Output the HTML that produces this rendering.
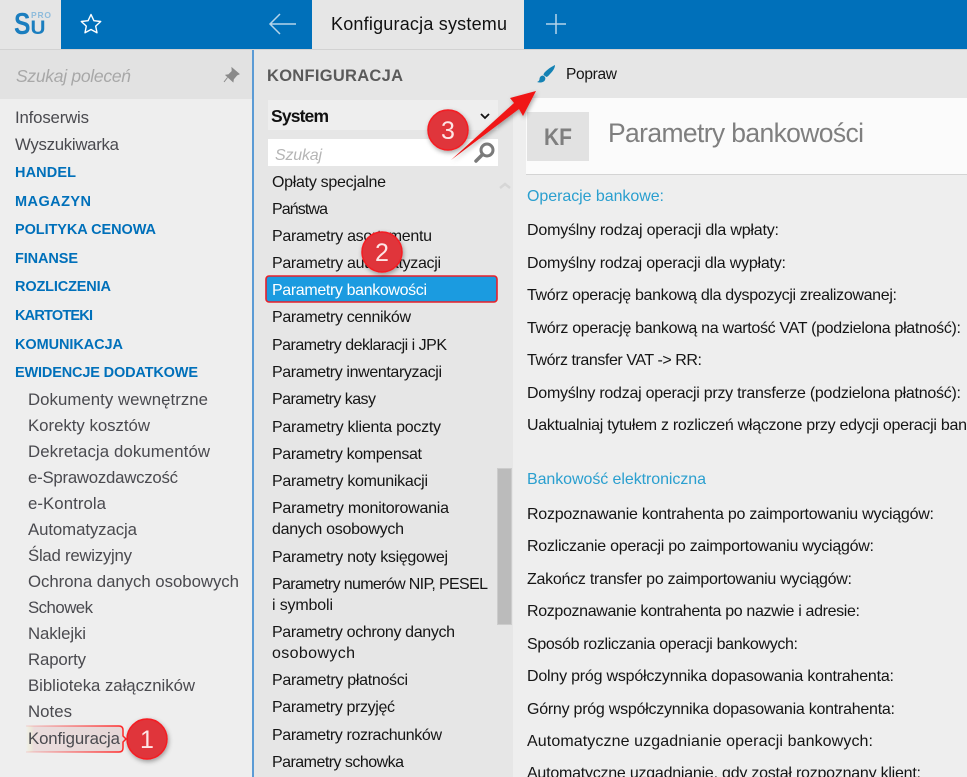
<!DOCTYPE html>
<html lang="pl"><head><meta charset="utf-8"><title>Konfiguracja systemu</title>
<style>
html,body{margin:0;padding:0;width:967px;height:777px;overflow:hidden;background:#eee}
svg{display:block}
text{font-family:"Liberation Sans",sans-serif;font-size:16px;fill:#151515}
.l text{fill:#4a4a4f;font-size:16.8px}
.c text{fill:#0070ba;font-weight:bold;font-size:14.5px}
.m text{font-size:16px}
</style></head><body>
<svg width="967" height="777" viewBox="0 0 967 777" xmlns="http://www.w3.org/2000/svg">
<defs>
<filter id="sh" x="-30%" y="-30%" width="170%" height="170%"><feDropShadow dx="1" dy="2" stdDeviation="2.5" flood-color="#000" flood-opacity=".35"/></filter>
<linearGradient id="hl" x1="0" x2="1" y1="0" y2="0"><stop offset="0" stop-color="#eeb" stop-opacity="0"/><stop offset=".08" stop-color="#ebdcdc"/><stop offset="1" stop-color="#e6d8d8"/></linearGradient>
<linearGradient id="hb" x1="0" x2="1" y1="0" y2="0"><stop offset="0" stop-color="#f22" stop-opacity=".1"/><stop offset="1" stop-color="#f22"/></linearGradient>
</defs>
<!-- backgrounds -->
<rect width="967" height="777" fill="#eee"/>
<rect x="0" y="0" width="967" height="49" fill="#0070ba"/>
<rect x="0" y="0" width="61" height="49" fill="#e5e5e5"/>
<rect x="312" y="0" width="212" height="49" fill="#e6e6e6"/>
<rect x="0" y="49" width="967" height="1" fill="#d2d2d2"/>
<rect x="0" y="50" width="252" height="49" fill="#e2e2e2"/>
<rect x="254" y="50" width="259" height="727" fill="#e6e6e6"/>
<rect x="513" y="50" width="454" height="49" fill="#e6e6e6"/>
<rect x="252" y="50" width="2" height="727" fill="#5b9bd5"/>
<rect x="526" y="98" width="441" height="77" fill="#d4d4d4"/>
<rect x="526" y="98" width="441" height="76" fill="#fbfbfb"/>
<rect x="527" y="112" width="62" height="49" fill="#e2e2e2"/>
<!-- logo -->
<text x="14" y="34" textLength="16.500" lengthAdjust="spacingAndGlyphs" style="fill:#1b7ebf;font-size:31px;font-weight:bold">S</text>
<text x="30.500" y="34" textLength="15" lengthAdjust="spacingAndGlyphs" style="fill:#1b7ebf;font-size:19.500px;font-weight:bold">U</text>
<text x="31" y="18" textLength="20" style="fill:#8fbcdc;font-size:8.500px;font-weight:bold">PRO</text>
<!-- top icons -->
<path d="M91 14.500l2.900 6.200 6.800.8-5 4.600 1.300 6.700-6-3.300-6 3.300 1.300-6.700-5-4.600 6.800-.8z" fill="none" stroke="#fff" stroke-width="1.400" stroke-linejoin="round"/>
<path d="M296 24H270M280 14L270 24L280 34" fill="none" stroke="#b5d4ea" stroke-width="1.500"/>
<path d="M556 14V34M546 24H566" fill="none" stroke="#b5d4ea" stroke-width="1.500"/>
<text x="331" y="30" textLength="176" style="font-size:18px;fill:#111">Konfiguracja systemu</text>
<!-- left search -->
<text x="16" y="82" textLength="115" style="font-size:17.500px;font-style:italic;fill:#a8a8a8">Szukaj poleceń</text>
<path d="M232 68l7 6-2.200 1-3.400 4-.4 2.600-7-6.400 2.600-.4 3.600-3.600zM227.500 77.500l-3.500 4.500" fill="#8a8a8a" stroke="#8a8a8a" stroke-width="1"/>
<!-- left menu -->
<g class="l">
<text x="15" y="123" textLength="74">Infoserwis</text>
<text x="15" y="150" textLength="104">Wyszukiwarka</text>
</g>
<g class="c">
<text x="15" y="177" textLength="61">HANDEL</text>
<text x="15" y="206" textLength="76">MAGAZYN</text>
<text x="15" y="234" textLength="141">POLITYKA CENOWA</text>
<text x="15" y="263" textLength="63">FINANSE</text>
<text x="15" y="291" textLength="96">ROZLICZENIA</text>
<text x="15" y="320" textLength="78">KARTOTEKI</text>
<text x="15" y="349" textLength="108">KOMUNIKACJA</text>
<text x="15" y="377" textLength="183">EWIDENCJE DODATKOWE</text>
</g>
<path d="M26 726H119Q123 726 123 730V736L126 739L123 742V748Q123 752 119 752H26Z" fill="url(#hl)"/>
<path d="M26 726H119Q123 726 123 730V736L126 739L123 742V748Q123 752 119 752H26" fill="none" stroke="url(#hb)" stroke-width="1.500"/>
<g class="l">
<text x="28" y="405" textLength="180">Dokumenty wewnętrzne</text>
<text x="28" y="431" textLength="122">Korekty kosztów</text>
<text x="28" y="457" textLength="182">Dekretacja dokumentów</text>
<text x="28" y="483" textLength="150">e-Sprawozdawczość</text>
<text x="28" y="509" textLength="78">e-Kontrola</text>
<text x="28" y="535" textLength="109">Automatyzacja</text>
<text x="28" y="561" textLength="104">Ślad rewizyjny</text>
<text x="28" y="587" textLength="211">Ochrona danych osobowych</text>
<text x="28" y="613" textLength="65">Schowek</text>
<text x="28" y="639" textLength="58">Naklejki</text>
<text x="28" y="665" textLength="58">Raporty</text>
<text x="28" y="691" textLength="167">Biblioteka załączników</text>
<text x="28" y="717" textLength="44">Notes</text>
<text x="28" y="744" textLength="92">Konfiguracja</text>
</g>
<!-- middle -->
<text x="267" y="81" textLength="136" style="font-size:16.500px;font-weight:bold;fill:#5a5a5a">KONFIGURACJA</text>
<rect x="268" y="100" width="230" height="30" fill="#eee"/>
<text x="271" y="122" textLength="58" style="font-size:17.500px;font-weight:bold;fill:#111">System</text>
<path d="M481 114l4 4 4-4" fill="none" stroke="#111" stroke-width="1.800"/>
<rect x="268" y="139" width="230" height="27" fill="#fff"/>
<text x="275" y="160" textLength="47" style="font-style:italic;fill:#b5b5b5;font-size:16px">Szukaj</text>
<circle cx="487" cy="150" r="6" fill="none" stroke="#7a7a7a" stroke-width="3"/>
<path d="M482 155l-6 6" stroke="#7a7a7a" stroke-width="3.500" stroke-linecap="round"/>
<path d="M500 188l5-4 5 4" fill="none" stroke="#d6d6d6" stroke-width="2.500"/>
<rect x="497.500" y="468.500" width="14" height="156" fill="#bbb" stroke="#ccc"/>
<rect x="266" y="276" width="231" height="26" rx="3" fill="#1b9be0" stroke="#e8202a" stroke-width="1.600"/>
<g class="m" transform="translate(0,3)">
<text x="272" y="184" textLength="114">Opłaty specjalne</text>
<text x="272" y="211" textLength="56">Państwa</text>
<text x="272" y="238" textLength="160">Parametry asortymentu</text>
<text x="272" y="265" textLength="169">Parametry automatyzacji</text>
<text x="272" y="292" textLength="155" style="fill:#fff">Parametry bankowości</text>
<text x="272" y="319" textLength="139">Parametry cenników</text>
<text x="272" y="347" textLength="175">Parametry deklaracji i JPK</text>
<text x="272" y="374" textLength="170">Parametry inwentaryzacji</text>
<text x="272" y="401" textLength="104">Parametry kasy</text>
<text x="272" y="429" textLength="169">Parametry klienta poczty</text>
<text x="272" y="456" textLength="150">Parametry kompensat</text>
<text x="272" y="483" textLength="156">Parametry komunikacji</text>
<text x="272" y="510" textLength="177">Parametry monitorowania</text>
<text x="272" y="531" textLength="132">danych osobowych</text>
<text x="272" y="559" textLength="176">Parametry noty księgowej</text>
<text x="272" y="586" textLength="216">Parametry numerów NIP, PESEL</text>
<text x="272" y="607" textLength="61">i symboli</text>
<text x="272" y="634" textLength="183">Parametry ochrony danych</text>
<text x="272" y="655" textLength="83">osobowych</text>
<text x="272" y="682" textLength="136">Parametry płatności</text>
<text x="272" y="709" textLength="123">Parametry przyjęć</text>
<text x="272" y="737" textLength="170">Parametry rozrachunków</text>
<text x="272" y="764" textLength="132">Parametry schowka</text>
</g>
<!-- toolbar -->
<path d="M555 65C553 66 549 68 545 72C544 73 543.500 74 543.500 75L546.500 77C548 76.500 549 75 550 74C553 71 555 68 555 65Z" fill="#1482b4"/>
<path d="M542.500 75.500C540.500 76 539.500 77.500 539.500 79C539.500 80.500 538.500 81.500 537 82C540 83 544 82.500 545 80C546 78 545 76 542.500 75.500Z" fill="#1482b4"/>
<text x="566" y="79" textLength="51" style="font-size:15.500px">Popraw</text>
<text x="544" y="145" textLength="28" style="font-size:24px;font-weight:bold;fill:#7f7f7f" lengthAdjust="spacingAndGlyphs">KF</text>
<text x="608" y="142" textLength="256" style="font-size:26.500px;fill:#7f7f7f">Parametry bankowości</text>
<!-- right -->
<text x="527" y="201" textLength="137" style="fill:#2a9fcf">Operacje bankowe:</text>
<g transform="translate(0,1)">
<text x="527" y="234" textLength="252">Domyślny rodzaj operacji dla wpłaty:</text>
<text x="527" y="267" textLength="259">Domyślny rodzaj operacji dla wypłaty:</text>
<text x="527" y="299" textLength="370">Twórz operację bankową dla dyspozycji zrealizowanej:</text>
<text x="527" y="332" textLength="434">Twórz operację bankową na wartość VAT (podzielona płatność):</text>
<text x="527" y="364" textLength="175">Twórz transfer VAT -&gt; RR:</text>
<text x="527" y="397" textLength="434">Domyślny rodzaj operacji przy transferze (podzielona płatność):</text>
<text x="527" y="429" textLength="440">Uaktualniaj tytułem z rozliczeń włączone przy edycji operacji ban</text>
<text x="527" y="483" textLength="179" style="fill:#2a9fcf">Bankowość elektroniczna</text>
<text x="527" y="518" textLength="407">Rozpoznawanie kontrahenta po zaimportowaniu wyciągów:</text>
<text x="527" y="550" textLength="347">Rozliczanie operacji po zaimportowaniu wyciągów:</text>
<text x="527" y="583" textLength="325">Zakończ transfer po zaimportowaniu wyciągów:</text>
<text x="527" y="615" textLength="333">Rozpoznawanie kontrahenta po nazwie i adresie:</text>
<text x="527" y="648" textLength="271">Sposób rozliczania operacji bankowych:</text>
<text x="527" y="680" textLength="367">Dolny próg współczynnika dopasowania kontrahenta:</text>
<text x="527" y="713" textLength="368">Górny próg współczynnika dopasowania kontrahenta:</text>
<text x="527" y="745" textLength="346">Automatyczne uzgadnianie operacji bankowych:</text>
<text x="527" y="777" textLength="394">Automatyczne uzgadnianie, gdy został rozpoznany klient:</text>
</g>
<!-- annotations -->
<path d="M451 160L514 103L510 98L536 91L523 116L519 109Z" fill="#f01414" filter="url(#sh)"/>
<g filter="url(#sh)">
<circle cx="147" cy="739" r="20" fill="#e0353a" stroke="#f51c22" stroke-width="1.500"/>
<circle cx="382" cy="252" r="20" fill="#e0353a" stroke="#f51c22" stroke-width="1.500"/>
<circle cx="448" cy="130" r="20" fill="#e0353a" stroke="#f51c22" stroke-width="1.500"/>
</g>
<text x="147" y="748" text-anchor="middle" style="font-size:25px;fill:#fde6e6">1</text>
<text x="382" y="261" text-anchor="middle" style="font-size:25px;fill:#fde6e6">2</text>
<text x="448" y="139" text-anchor="middle" style="font-size:25px;fill:#fde6e6">3</text>
</svg>
</body></html>
